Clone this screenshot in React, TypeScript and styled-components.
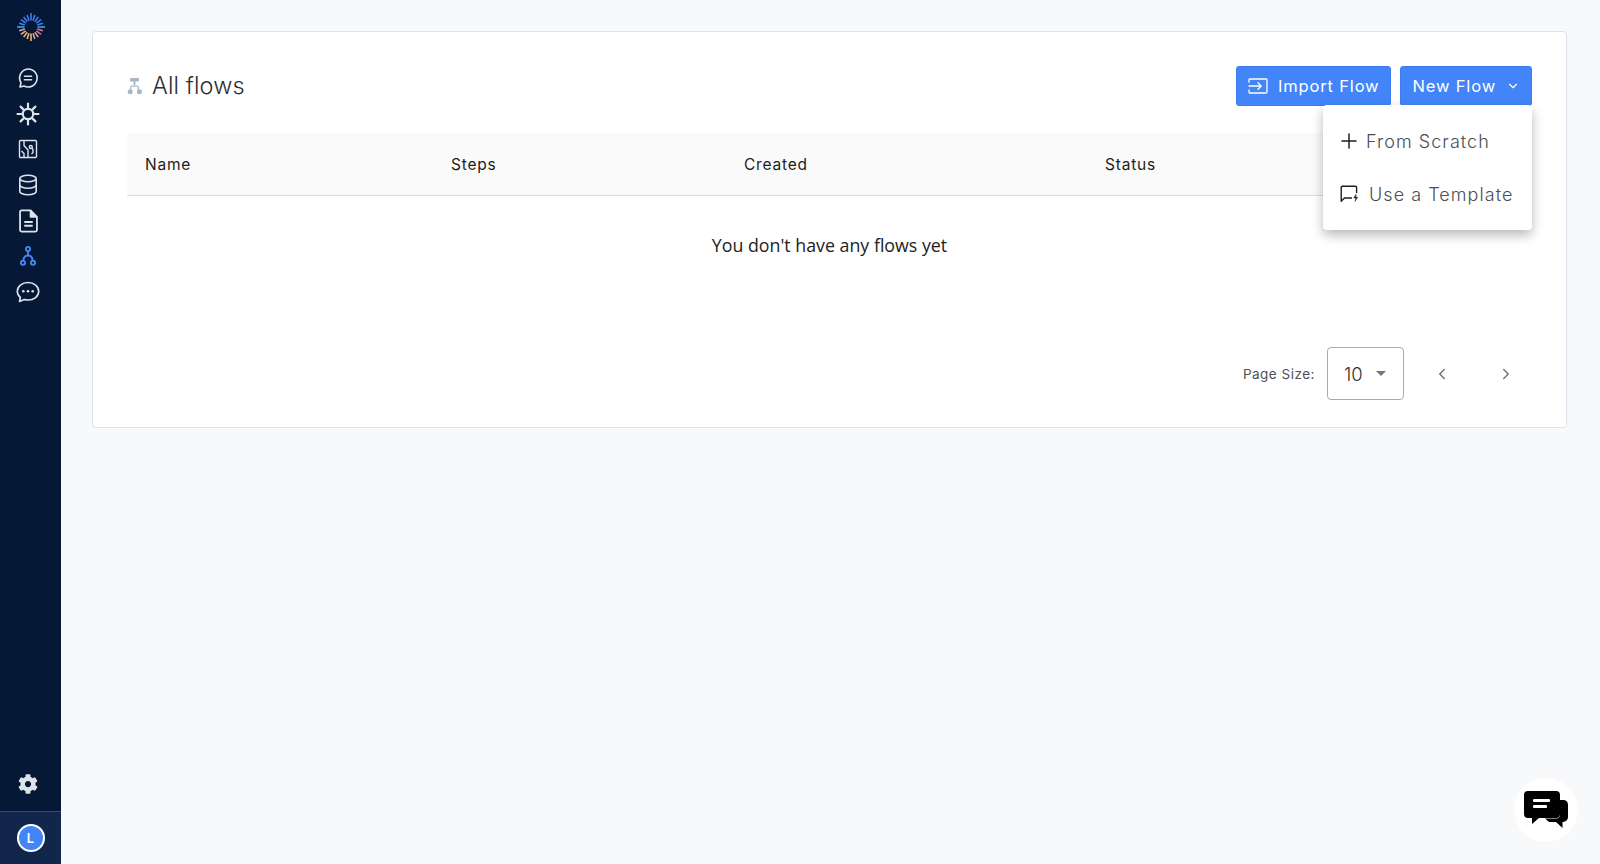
import React from 'react';
import styled, { createGlobalStyle } from 'styled-components';
import { Plus, ChevronDown, ChevronLeft, ChevronRight } from 'lucide-react';
import { FaCog } from 'react-icons/fa';

const GlobalStyle = createGlobalStyle`
  html, body { margin: 0; padding: 0; height: 100%; }
  body { font-family: Inter, "Liberation Sans", sans-serif; background: #f8f9fb; }
  #root { height: 100%; }
`;

const Page = styled.div`
  display: flex;
  height: 864px;
  overflow: hidden;
  background: #f8f9fb;
`;

const Sidebar = styled.aside`
  width: 61px;
  flex: none;
  display: flex;
  flex-direction: column;
  align-items: center;
  background: #051937;
`;

const LogoWrap = styled.div`
  height: 53px;
  display: flex;
  align-items: center;
  justify-content: center;
`;

const NavList = styled.nav`
  display: flex;
  flex-direction: column;
  align-items: center;
  gap: 11px;
  margin-top: 13px;
  margin-left: -5px;
  flex: 1;
`;

const NavIcon = styled.div<{ $active?: boolean }>`
  width: 24px;
  height: 24.6px;
  display: flex;
  align-items: center;
  justify-content: center;
  color: ${(p) => (p.$active ? '#4285f4' : '#dde3ea')};
`;

const SettingsIcon = styled(NavIcon)`
  margin: 0 5px 15px 0;
`;

const UserArea = styled.div`
  align-self: stretch;
  height: 52px;
  border-top: 1px solid #3c4a5e;
  background: #11264a;
  display: flex;
  align-items: center;
  justify-content: center;
`;

const Avatar = styled.div`
  width: 24px;
  height: 24px;
  border: 2px solid #fff;
  border-radius: 50%;
  background: #4285f4;
  color: #fff;
  font-size: 13px;
  font-weight: 600;
  display: flex;
  align-items: center;
  justify-content: center;
`;

const Main = styled.main`
  flex: 1;
  padding: 31px 33px 0 31px;
`;

const Card = styled.section`
  position: relative;
  height: 397px;
  box-sizing: border-box;
  padding: 34px 34px 0;
  background: #fff;
  border: 1px solid #dde3ec;
  border-radius: 4px;
`;

const CardHeader = styled.div`
  display: flex;
  align-items: center;
  justify-content: space-between;
  height: 40px;
`;

const Title = styled.h1`
  display: flex;
  align-items: center;
  gap: 9px;
  margin: -1px 0 0;
  font-size: 23.5px;
  font-weight: 300;
  letter-spacing: 0.1px;
  color: #2c2f33;
`;

const Actions = styled.div`
  display: flex;
  gap: 9px;
`;

const Button = styled.button`
  display: flex;
  align-items: center;
  height: 40px;
  padding: 0 11px;
  border: 1px solid #3b7cf2;
  border-radius: 3px;
  background: #4285f9;
  color: #fff;
  font-family: inherit;
  font-size: 16.5px;
  letter-spacing: 0.85px;
`;

const ImportButton = styled(Button)`
  gap: 10px;
`;

const NewButton = styled(Button)`
  gap: 10px;
`;

const Menu = styled.div`
  position: absolute;
  top: 73px;
  right: 34px;
  width: 209px;
  height: 125px;
  z-index: 2;
  background: #fff;
  border-radius: 4px;
  box-shadow: 0 5px 12px rgba(0, 0, 0, 0.28);
  display: flex;
  flex-direction: column;
  justify-content: center;
  gap: 28px;
  padding-left: 17px;
  box-sizing: border-box;
`;

const MenuItem = styled.div<{ $gap: number }>`
  display: flex;
  align-items: center;
  gap: ${(p) => p.$gap}px;
  height: 25px;
  color: #4a4e53;
  font-size: 18px;
  font-weight: 300;
  letter-spacing: 1.05px;
  svg { color: #1d1f22; flex: none; }
`;

const PlusIcon = styled(Plus)`
  margin-left: -3px;
`;

const TableHead = styled.div`
  display: grid;
  grid-template-columns: 306px 293px 361px 1fr;
  align-items: center;
  height: 62px;
  margin-top: 27px;
  padding-left: 18px;
  background: #fafafa;
  border-bottom: 1px solid #dcdcdc;
  font-size: 15.5px;
  font-weight: 400;
  letter-spacing: 0.8px;
  color: #1c1c1c;
`;

const EmptyRow = styled.div`
  height: 98px;
  padding-top: 37px;
  box-sizing: border-box;
  text-align: center;
  font-family: "Open Sans", sans-serif;
  font-size: 17.8px;
  line-height: 24px;
  color: #222;
`;

const Pager = styled.div`
  display: flex;
  align-items: center;
  justify-content: flex-end;
  margin-top: 53px;
  padding-right: 17px;
  color: #6f7277;
`;

const PagerLabel = styled.span`
  font-size: 13.5px;
  letter-spacing: 0.5px;
  color: #4d5054;
  margin-right: 12px;
`;

const PageSelect = styled.div`
  width: 77px;
  height: 53px;
  box-sizing: border-box;
  border: 1px solid #a9a9a9;
  border-radius: 4px;
  display: flex;
  align-items: center;
  padding-left: 16px;
  gap: 13px;
  font-size: 18.5px;
  font-weight: 300;
  color: #333;
`;

const Caret = styled.span`
  width: 0;
  height: 0;
  border-left: 5.5px solid transparent;
  border-right: 5.5px solid transparent;
  border-top: 5.5px solid #757575;
`;

const PagerArrows = styled.div`
  display: flex;
  gap: 46px;
  margin-left: 29px;
`;

const ChatBubble = styled.div`
  position: fixed;
  right: 22px;
  bottom: 22px;
  width: 64px;
  height: 64px;
  border-radius: 50%;
  background: #fff;
  display: flex;
  align-items: center;
  justify-content: center;
`;

const rays = Array.from({ length: 20 }, (_, i) => i);
const rayColor = (i: number) => {
  if (i === 5 || i === 15) return '#35a5e8';
  if (i < 5 || i > 15) return '#3f7cf0';
  if (i <= 7) return '#e0708a';
  if (i <= 9) return '#e8a07a';
  if (i <= 11) return '#eeb878';
  if (i <= 13) return '#e8b080';
  return '#d8a0b0';
};

const Logo = () => (
  <svg width="30" height="30" viewBox="0 0 30 30">
    {rays.map((i) => (
      <line
        key={i}
        x1="15"
        y1={i % 5 === 0 ? 1 : 2.5}
        x2="15"
        y2="8.5"
        stroke={rayColor(i)}
        strokeWidth="1.6"
        transform={`rotate(${i * 18} 15 15)`}
      />
    ))}
  </svg>
);

const ChatLinesIcon = () => (
  <svg width="22" height="22" viewBox="0 0 22 22" fill="none" stroke="currentColor" strokeWidth="1.6" strokeLinecap="round" strokeLinejoin="round">
    <path d="M11 2a9 9 0 1 1-4 17l-4 1 1-4.2A9 9 0 0 1 11 2z" />
    <path d="M7.5 9.3h7M7.5 12.7h7" />
  </svg>
);

const SunIcon = () => (
  <svg width="24" height="24" viewBox="0 0 24 24" fill="none" stroke="currentColor" strokeWidth="2.2" strokeLinecap="round">
    <circle cx="12" cy="12" r="5.2" />
    <path d="M12 1.5v4M12 18.5v4M1.5 12h4M18.5 12h4M4.6 4.6l2.8 2.8M16.6 16.6l2.8 2.8M4.6 19.4l2.8-2.8M16.6 7.4l2.8-2.8" />
  </svg>
);

const DiagramIcon = () => (
  <svg width="20" height="20" viewBox="0 0 20 20" fill="none" stroke="currentColor" strokeWidth="1.4" strokeLinejoin="round">
    <rect x="1.5" y="1.5" width="17" height="17" rx="1" />
    <path d="M6 1.5v5l4 4.5v7.5M6 18.5v-4L3.5 12" />
    <circle cx="12.8" cy="8" r="1.5" />
    <path d="M14 9.2l1 1.3v3l-1.5 1.5" />
  </svg>
);

const DatabaseIcon = () => (
  <svg width="20" height="22" viewBox="0 0 20 22" fill="none" stroke="currentColor" strokeWidth="1.6">
    <ellipse cx="10" cy="4.5" rx="8.2" ry="3.3" />
    <path d="M1.8 4.5v13c0 1.8 3.7 3.3 8.2 3.3s8.2-1.5 8.2-3.3v-13" />
    <path d="M1.8 11c0 1.8 3.7 3.3 8.2 3.3s8.2-1.5 8.2-3.3" />
  </svg>
);

const DocIcon = () => (
  <svg width="19" height="24" viewBox="0 0 18 22" fill="none" stroke="currentColor" strokeWidth="1.7" strokeLinejoin="round">
    <path d="M2.5 1H11l6 6v12.5a1.5 1.5 0 0 1-1.5 1.5h-13A1.5 1.5 0 0 1 1 19.5v-17A1.5 1.5 0 0 1 2.5 1z" />
    <path d="M11 1v6h6" fill="currentColor" />
    <path d="M5 12h8M5 15.5h8" strokeWidth="2" />
  </svg>
);

const FlowIcon = () => (
  <svg width="16" height="20" viewBox="0 0 16 20" fill="none" stroke="currentColor" strokeWidth="1.9">
    <circle cx="8" cy="3" r="2.1" />
    <circle cx="3" cy="16.8" r="2.1" />
    <circle cx="13" cy="16.8" r="2.1" />
    <path d="M8 5.1v4.400M3.300 14.700c.3-3.200 2.200-5.200 4.700-5.200s4.400 2 4.700 5.200" />
  </svg>
);

const ChatDotsIcon = () => (
  <svg width="24" height="22" viewBox="0 0 24 22" fill="none" stroke="currentColor" strokeWidth="1.6" strokeLinejoin="round">
    <path d="M12 1.500c6 0 10.700 3.800 10.700 8.800S18 19 12 19c-1.300 0-2.600-.2-3.700-.5L3.500 20.500l.9-4C2.400 15 1.300 12.800 1.300 10.300 1.300 5.300 6 1.500 12 1.500z" />
    <circle cx="7.300" cy="10.300" r="1.300" fill="currentColor" stroke="none" />
    <circle cx="12" cy="10.300" r="1.300" fill="currentColor" stroke="none" />
    <circle cx="16.700" cy="10.300" r="1.300" fill="currentColor" stroke="none" />
  </svg>
);

const TitleIcon = () => (
  <svg width="16" height="18" viewBox="0 0 16 18" fill="#a9b6c6">
    <rect x="3" y="1" width="9" height="3.600" rx="1" />
    <rect x="6.600" y="4" width="1.800" height="4" />
    <path d="M3 14v-3.500a2 2 0 0 1 2-2h5a2 2 0 0 1 2 2V14h-1.300v-3.500a.7.7 0 0 0-.7-.7H5a.7.7 0 0 0-.7.7V14z" />
    <circle cx="3.200" cy="14.800" r="2.500" />
    <circle cx="12.400" cy="14.800" r="2.500" />
  </svg>
);

const ImportIcon = () => (
  <svg width="20" height="16" viewBox="0 0 20 16" fill="none" stroke="#fff" strokeWidth="1.300" strokeLinecap="round" strokeLinejoin="round">
    <path d="M1 4V2a1 1 0 0 1 1-1h16a1 1 0 0 1 1 1v12a1 1 0 0 1-1 1H2a1 1 0 0 1-1-1v-2" />
    <path d="M1 8h12M10 4.800 13.200 8 10 11.200" />
  </svg>
);

const TemplateIcon = () => (
  <svg width="19" height="18" viewBox="0 0 19 18" fill="none" stroke="currentColor" strokeWidth="1.400" strokeLinejoin="round">
    <path d="M12 13H4.500L1.200 16.200V2.500A1.300 1.300 0 0 1 2.500 1.200h12.800a1.300 1.300 0 0 1 1.300 1.300V8" />
    <path d="M15.800 9.500 13.800 13h2.200l-1 3.500 2.600-4.500h-2.200l.8-2.500z" fill="currentColor" strokeWidth="0.500" />
  </svg>
);

const SupportIcon = () => (
  <svg width="46" height="38" viewBox="0 0 46 38">
    <path d="M37 9h3.500A4.500 4.500 0 0 1 45 13.500V26a5 5 0 0 1-5 5h-.5v6L33 31h-7l-4-3.500h11a4 4 0 0 0 4-4z" fill="#000" />
    <path d="M5 0h28a4 4 0 0 1 4 4v19a4 4 0 0 1-4 4H16l-7 6v-6H5a4 4 0 0 1-4-4V4a4 4 0 0 1 4-4z" fill="#000" />
    <rect x="10" y="8" width="17" height="3" rx="1" fill="#fff" />
    <rect x="10" y="14" width="14" height="3" rx="1" fill="#fff" />
  </svg>
);

const App: React.FC = () => (
  <Page>
    <GlobalStyle />
    <Sidebar>
      <LogoWrap>
        <Logo />
      </LogoWrap>
      <NavList>
        <NavIcon><ChatLinesIcon /></NavIcon>
        <NavIcon><SunIcon /></NavIcon>
        <NavIcon><DiagramIcon /></NavIcon>
        <NavIcon><DatabaseIcon /></NavIcon>
        <NavIcon><DocIcon /></NavIcon>
        <NavIcon $active><FlowIcon /></NavIcon>
        <NavIcon><ChatDotsIcon /></NavIcon>
      </NavList>
      <SettingsIcon><FaCog size={20} /></SettingsIcon>
      <UserArea>
        <Avatar>L</Avatar>
      </UserArea>
    </Sidebar>
    <Main>
      <Card>
        <CardHeader>
          <Title><TitleIcon />All flows</Title>
          <Actions>
            <ImportButton><ImportIcon />Import Flow</ImportButton>
            <NewButton>New Flow<ChevronDown size={14} /></NewButton>
          </Actions>
        </CardHeader>
        <Menu>
          <MenuItem $gap={5}><PlusIcon size={24} strokeWidth={1.5} />From Scratch</MenuItem>
          <MenuItem $gap={10}><TemplateIcon />Use a Template</MenuItem>
        </Menu>
        <TableHead>
          <span>Name</span>
          <span>Steps</span>
          <span>Created</span>
          <span>Status</span>
        </TableHead>
        <EmptyRow>You don't have any flows yet</EmptyRow>
        <Pager>
          <PagerLabel>Page Size:</PagerLabel>
          <PageSelect>10<Caret /></PageSelect>
          <PagerArrows>
            <ChevronLeft size={18} />
            <ChevronRight size={18} />
          </PagerArrows>
        </Pager>
      </Card>
    </Main>
    <ChatBubble><SupportIcon /></ChatBubble>
  </Page>
);

export default App;
